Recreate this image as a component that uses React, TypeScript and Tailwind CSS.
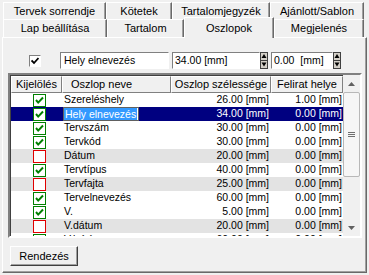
import React from "react";

type Row = {
  name: string;
  on: boolean;
  width: string;
  label: string;
  selected?: boolean;
};

const rows: Row[] = [
  { name: "Szereléshely", on: true, width: "26.00", label: "1.00" },
  { name: "Hely elnevezés", on: true, width: "34.00", label: "0.00", selected: true },
  { name: "Tervszám", on: true, width: "30.00", label: "0.00" },
  { name: "Tervkód", on: true, width: "30.00", label: "0.00" },
  { name: "Dátum", on: false, width: "20.00", label: "0.00" },
  { name: "Tervtípus", on: true, width: "40.00", label: "0.00" },
  { name: "Tervfajta", on: false, width: "25.00", label: "0.00" },
  { name: "Tervelnevezés", on: true, width: "60.00", label: "0.00" },
  { name: "V.", on: true, width: "5.00", label: "0.00" },
  { name: "V.dátum", on: false, width: "20.00", label: "0.00" },
  { name: "V.leírás", on: true, width: "60.00", label: "0.00" },
];

function Tab({ label, w, active }: { label: string; w: string; active?: boolean }) {
  if (active) {
    return (
      <div
        className={`relative z-10 -mb-px flex h-[21px] ${w} items-start justify-center border-l border-t border-r border-l-white border-t-white border-r-[#696969] bg-[#f0f0f0] pt-[2px] shadow-[inset_-1px_0_#a0a0a0]`}
      >
        {label}
      </div>
    );
  }
  return (
    <div
      className={`flex h-[18px] ${w} items-center justify-center border-l border-t border-r border-l-white border-t-white border-r-[#696969] bg-[#f0f0f0] shadow-[inset_-1px_0_#a0a0a0]`}
    >
      {label}
    </div>
  );
}

function Spin() {
  return (
    <svg width="8" height="17" viewBox="0 0 8 17" className="shrink-0">
      <rect x="0" y="0" width="8" height="17" fill="#404040" />
      <rect x="1" y="1" width="6" height="7" fill="#d4d0c8" />
      <rect x="1" y="9" width="6" height="7" fill="#d4d0c8" />
      <path d="M4 2 L6.5 6 L1.5 6 Z" fill="#000" />
      <path d="M1.5 10.5 L6.5 10.5 L4 14.5 Z" fill="#000" />
    </svg>
  );
}

function CheckCell({ on }: { on: boolean }) {
  return (
    <svg width="13" height="13" viewBox="0 0 13 13">
      <rect x="0.5" y="0.5" width="12" height="12" fill="#fff" stroke={on ? "#008000" : "#e00000"} />
      {on && <path d="M3 6 L5.2 8.6 L10 3.5" fill="none" stroke="#008000" strokeWidth="2" />}
    </svg>
  );
}

function HeaderCell({ children, w, className = "" }: { children: React.ReactNode; w: string; className?: string }) {
  return (
    <div
      className={`flex h-full ${w} items-center border-l border-t border-r border-b border-l-white border-t-white border-r-[#808080] border-b-[#808080] ${className}`}
    >
      {children}
    </div>
  );
}

export default function App() {
  return (
    <div className="h-[275px] w-[369px] overflow-hidden bg-[#f0f0f0] pl-[2px] pt-[2px] text-[11px] text-black [font-family:'Liberation_Sans',Arial,sans-serif]">
      <div className="flex pl-px">
        <Tab label="Tervek sorrendje" w="w-[103px]" />
        <Tab label="Kötetek" w="w-[66px]" />
        <Tab label="Tartalomjegyzék" w="w-[98px]" />
        <Tab label="Ajánlott/Sablon" w="w-[94px]" />
      </div>
      <div className="flex h-[17px] items-end pl-px">
        <Tab label="Lap beállítása" w="w-[104px]" />
        <Tab label="Tartalom" w="w-[77px]" />
        <Tab label="Oszlopok" w="w-[90px]" active />
        <Tab label="Megjelenés" w="w-[90px]" />
      </div>
      <div className="flex h-[236px] w-[365px] flex-col border border-l-white border-t-white border-r-[#696969] border-b-[#696969] shadow-[inset_-1px_-1px_#a0a0a0]">
        <div className="mt-[14px] flex h-[17px] items-center">
          <div className="ml-[26px] flex h-[12px] w-[12px] items-center justify-center border border-l-[#808080] border-t-[#808080] border-r-white border-b-white bg-white">
            <svg width="8" height="8" viewBox="0 0 8 8">
              <path d="M0.5 3.5 L3 6 L7.5 1" fill="none" stroke="#000" strokeWidth="1.8" />
            </svg>
          </div>
          <div className="ml-[19px] flex h-[17px] w-[109px] items-center border border-l-[#808080] border-t-[#808080] border-r-white border-b-white bg-white pl-[3px] text-[10.5px]">
            Hely elnevezés
          </div>
          <div className="ml-[3px] flex h-[17px] w-[88px] items-center border border-l-[#808080] border-t-[#808080] border-r-white border-b-white bg-white pl-[2px] text-[10.5px]">
            34.00 [mm]
          </div>
          <Spin />
          <div className="ml-[3px] flex h-[17px] w-[62px] items-center border border-l-[#808080] border-t-[#808080] border-r-white border-b-white bg-white pl-[2px] text-[10.5px]">
            0.00&nbsp;&nbsp;[mm]
          </div>
          <Spin />
        </div>

        <div className="ml-[5px] mt-[4px] flex h-[165px] w-[354px] border-2 border-l-[#808080] border-t-[#808080] border-r-white border-b-white bg-white shadow-[inset_1px_1px_#404040]">
          <div className="flex flex-1 flex-col overflow-hidden pl-px pt-px">
            <div className="flex h-[17px] shrink-0 bg-[#f0f0f0]">
              <HeaderCell w="w-[51px]" className="justify-center">Kijelölés</HeaderCell>
              <HeaderCell w="w-[109px]" className="pl-[8px]">Oszlop neve</HeaderCell>
              <HeaderCell w="w-[100px]" className="justify-center">Oszlop szélessége</HeaderCell>
              <HeaderCell w="w-[72px]" className="justify-center">Felirat helye</HeaderCell>
            </div>
            {rows.map((r) => (
              <div
                key={r.name}
                className={`flex h-[14px] shrink-0 items-center text-[10.5px] ${
                  r.selected ? "bg-[#000080] text-white" : r.on ? "bg-white" : "bg-[#e3e3e3]"
                }`}
              >
                <div className="flex w-[51px] pl-[22px]">
                  <CheckCell on={r.on} />
                </div>
                <div className="flex w-[109px] items-center">
                  {r.selected ? (
                    <div className="ml-px flex h-[14px] w-[76px] items-center border border-[#606060] bg-white">
                      <span className="bg-[#3399ff] px-px leading-[12px] text-white">{r.name}</span>
                    </div>
                  ) : (
                    <span className="pl-[2px]">{r.name}</span>
                  )}
                </div>
                <div className="w-[100px] pr-[2px] text-right">{r.width} [mm]</div>
                <div className="w-[72px] pr-[1px] text-right">{r.label} [mm]</div>
              </div>
            ))}
          </div>
          <div className="flex w-[17px] shrink-0 flex-col bg-[#f0f0f0]">
            <div className="flex h-[17px] shrink-0 items-center justify-center">
              <svg width="7" height="4" viewBox="0 0 7 4">
                <path d="M3.5 0 L7 4 L0 4 Z" fill="#606060" />
              </svg>
            </div>
            <div className="flex h-[85px] shrink-0 items-center justify-center rounded-[2px] border border-[#b8b8b8] bg-[#f6f6f6]">
              <div className="flex flex-col gap-px">
                <div className="h-px w-[7px] bg-[#707070]" />
                <div className="h-px w-[7px] bg-[#707070]" />
                <div className="h-px w-[7px] bg-[#707070]" />
              </div>
            </div>
            <div className="flex-1" />
            <div className="flex h-[17px] shrink-0 items-center justify-center">
              <svg width="7" height="4" viewBox="0 0 7 4">
                <path d="M0 0 L7 0 L3.5 4 Z" fill="#606060" />
              </svg>
            </div>
          </div>
        </div>

        <button className="ml-[7px] mt-[8px] flex h-[20px] w-[68px] items-center justify-center border border-l-white border-t-white border-r-[#404040] border-b-[#404040] bg-[#f0f0f0] shadow-[inset_-1px_-1px_#a0a0a0]">
          Rendezés
        </button>
      </div>
    </div>
  );
}
